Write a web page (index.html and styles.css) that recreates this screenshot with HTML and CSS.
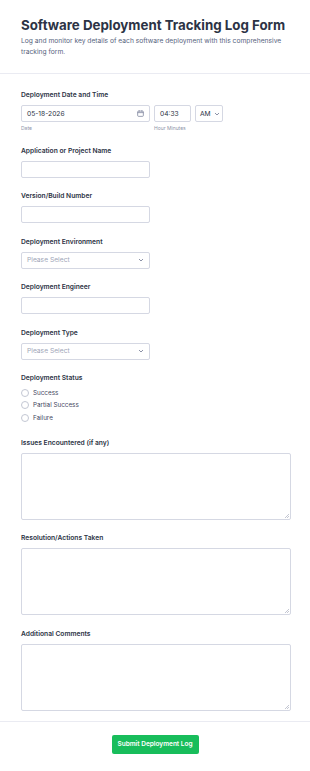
FILE: index.html
```html
<!DOCTYPE html>
<html lang="en">
<head>
    <meta charset="UTF-8">
    <title>Software Deployment Tracking Log Form</title>
    <link rel="stylesheet" href="styles.css">
</head>
<body>

    <div class="form-header">
        <div class="form-title">Software Deployment Tracking Log Form</div>
        <div class="form-desc">Log and monitor key details of each software deployment with this comprehensive tracking form.</div>
    </div>

    <div class="form-body">

        <div class="field field-date">
            <div class="label">Deployment Date and Time</div>
            <div class="date-row">
                <div class="date-col">
                    <div class="box box-date">
                        <span>05-18-2026</span>
                        <svg class="cal-icon" width="7" height="7" viewBox="0 0 8 8">
                            <rect x="0.75" y="1.25" width="6.5" height="6" rx="1" fill="none" stroke="#6f7690" stroke-width="0.8"/>
                            <line x1="0.75" y1="3" x2="7.25" y2="3" stroke="#6f7690" stroke-width="0.8"/>
                            <line x1="2.5" y1="0.3" x2="2.5" y2="1.8" stroke="#6f7690" stroke-width="0.8"/>
                            <line x1="5.5" y1="0.3" x2="5.5" y2="1.8" stroke="#6f7690" stroke-width="0.8"/>
                        </svg>
                    </div>
                    <div class="sublabel">Date</div>
                </div>
                <div class="date-col">
                    <div class="box box-time"><span>04:33</span></div>
                    <div class="sublabel">Hour Minutes</div>
                </div>
                <div class="date-col">
                    <div class="box box-ampm">
                        <span>AM</span>
                        <svg class="chev" width="6" height="4" viewBox="0 0 6 4"><path d="M1 1 L3 3 L5 1" fill="none" stroke="#6f7690" stroke-width="0.8"/></svg>
                    </div>
                </div>
            </div>
        </div>

        <div class="field">
            <div class="label">Application or Project Name</div>
            <div class="box box-input"></div>
        </div>

        <div class="field">
            <div class="label">Version/Build Number</div>
            <div class="box box-input"></div>
        </div>

        <div class="field">
            <div class="label">Deployment Environment</div>
            <div class="box box-input box-select">
                <span class="placeholder">Please Select</span>
                <svg class="chev" width="6" height="4" viewBox="0 0 6 4"><path d="M1 1 L3 3 L5 1" fill="none" stroke="#6f7690" stroke-width="0.8"/></svg>
            </div>
        </div>

        <div class="field">
            <div class="label">Deployment Engineer</div>
            <div class="box box-input"></div>
        </div>

        <div class="field">
            <div class="label">Deployment Type</div>
            <div class="box box-input box-select">
                <span class="placeholder">Please Select</span>
                <svg class="chev" width="6" height="4" viewBox="0 0 6 4"><path d="M1 1 L3 3 L5 1" fill="none" stroke="#6f7690" stroke-width="0.8"/></svg>
            </div>
        </div>

        <div class="field">
            <div class="label">Deployment Status</div>
            <div class="radios">
                <div class="radio-row"><span class="radio"></span>Success</div>
                <div class="radio-row"><span class="radio"></span>Partial Success</div>
                <div class="radio-row"><span class="radio"></span>Failure</div>
            </div>
        </div>

        <div class="field">
            <div class="label">Issues Encountered (if any)</div>
            <div class="box box-area"><span class="grip"></span></div>
        </div>

        <div class="field">
            <div class="label">Resolution/Actions Taken</div>
            <div class="box box-area"><span class="grip"></span></div>
        </div>

        <div class="field">
            <div class="label">Additional Comments</div>
            <div class="box box-area"><span class="grip"></span></div>
        </div>

    </div>

    <div class="form-footer">
        <button class="submit-btn" type="button">Submit Deployment Log</button>
    </div>

</body>
</html>
```

FILE: styles.css
```css
* {
    margin: 0;
    padding: 0;
    box-sizing: border-box;
}
body {
    font-family: Inter, "Liberation Sans", sans-serif;
    color: #2c3345;
    background: #fff;
    width: 310px;
}

/*********************/
.form-header {
    padding: 15px 21px 15px 21px;
    border-bottom: 1px solid #eaebf2;
}
.form-title {
    font-size: 13.3px;
    font-weight: 700;
    line-height: 20px;
    color: #2c3345;
    white-space: nowrap;
}
.form-desc {
    margin-top: 1px;
    font-size: 6.7px;
    line-height: 11px;
    color: #57647e;
    max-width: 268px;
}

/*********************/
.form-body {
    padding: 16px 21px 10px 21px;
    border-bottom: 1px solid #eaebf2;
}
.field {
    margin-bottom: 13.5px;
}
.field:last-child {
    margin-bottom: 0;
}
.label {
    font-size: 6.7px;
    font-weight: 600;
    line-height: 10px;
    margin-bottom: 5px;
    color: #2c3345;
}
.box {
    border: 1px solid #d5d8e3;
    border-radius: 2px;
    background: #fff;
    height: 17px;
    display: flex;
    align-items: center;
    justify-content: space-between;
    padding: 0 5px;
    font-size: 6.7px;
    color: #2c3345;
}
.chev {
    flex-shrink: 0;
}
.box-input {
    width: 129px;
}
.box-select .placeholder {
    color: #a0a6b8;
}
.box-area {
    width: 270px;
    height: 67px;
    position: relative;
}
.grip {
    position: absolute;
    right: 1px;
    bottom: 1px;
    width: 4px;
    height: 4px;
    background: linear-gradient(135deg, transparent 45%, #c4c7d2 45%, #c4c7d2 55%, transparent 55%, transparent 70%, #c4c7d2 70%, #c4c7d2 80%, transparent 80%);
}

/*********************/
.date-row {
    display: flex;
    gap: 4px;
}
.box-date {
    width: 129px;
}
.box-time {
    width: 37px;
}
.box-ampm {
    width: 28px;
    justify-content: flex-start;
    gap: 3px;
    padding: 0 4px;
}
.sublabel {
    margin-top: 2px;
    font-size: 5px;
    line-height: 8px;
    color: #8d93a8;
}

/*********************/
.radios {
    margin-top: -1.5px;
}
.radio-row {
    display: flex;
    align-items: center;
    height: 12.5px;
    font-size: 6.3px;
    color: #3f4760;
}
.radio {
    width: 8px;
    height: 8px;
    border: 1px solid #c3c7d3;
    border-radius: 50%;
    margin-right: 4px;
}

/*********************/
.form-footer {
    display: flex;
    justify-content: center;
    padding: 13px 0 17px 0;
}
.submit-btn {
    background: #18bd5b;
    color: #fff;
    border: none;
    border-radius: 2px;
    font-family: Inter, "Liberation Sans", sans-serif;
    font-size: 6.5px;
    font-weight: 600;
    width: 87px;
    height: 19px;
}
```
